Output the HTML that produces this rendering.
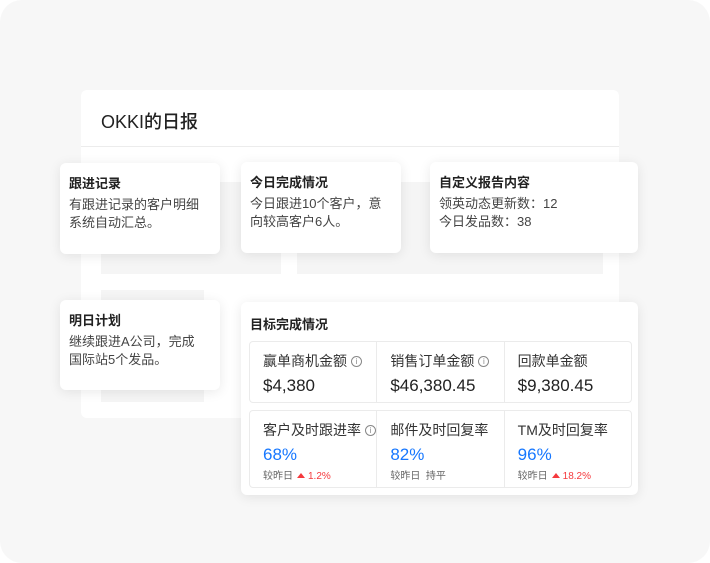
<!DOCTYPE html>
<html><head><meta charset="utf-8"><style>
*{margin:0;padding:0;box-sizing:border-box}
body{width:710px;height:563px;background:#fff;font-family:"Liberation Sans","Noto Sans CJK SC",sans-serif;position:relative;overflow:hidden;color:#262626}
.bg{position:absolute;left:0;top:0;width:710px;height:563px;background:#f7f7f7;border-radius:22px}
.panel{position:absolute;left:81px;top:90px;width:538px;height:328px;background:#fff;border-radius:6px}
.panel h1{position:absolute;left:20px;top:18px;font-size:18px;font-weight:500;color:#222}
.line{position:absolute;left:0;top:56px;width:538px;height:1px;background:#ececec}
.g{position:absolute;background:#f5f5f5}
.card{position:absolute;background:#fff;border-radius:6px;box-shadow:0 2px 12px rgba(0,0,0,.09);padding:10px 9px}
.card b{display:block;font-size:13px;font-weight:700;color:#222;margin-bottom:4px}
.card p{font-size:13px;line-height:18px;color:#444}
.grid{position:absolute;left:8px;border:1px solid #ebebeb;border-radius:4px;width:383px;display:flex;background:#fff}
.cell{flex:1;border-right:1px solid #ebebeb;padding:9px 0 0 13px}
.cell:last-child{border-right:0}
.lbl{font-size:14px;color:#333;display:flex;align-items:center}
.i{display:inline-block;width:11px;height:11px;border:1px solid #888;border-radius:50%;margin-left:4px;font-size:8px;line-height:9px;text-align:center;color:#888}
.val{font-size:17px;color:#222;margin-top:5px}
.blue{color:#1677ff}
.sm{font-size:10px;color:#666;margin-top:2px}
.red{color:#f5393d}
.tri{display:inline-block;width:0;height:0;border-left:4px solid transparent;border-right:4px solid transparent;border-bottom:5px solid #f5393d;margin:0 3px 1px 4px}
</style></head><body>
<div class="bg"></div>
<div class="panel"><h1>OKKI的日报</h1><div class="line"></div></div>
<div class="g" style="left:101px;top:182px;width:180px;height:92px"></div>
<div class="g" style="left:297px;top:182px;width:306px;height:92px"></div>
<div class="g" style="left:101px;top:290px;width:103px;height:112px"></div>
<div class="card" style="left:60px;top:163px;width:160px;height:91px"><b>跟进记录</b><p>有跟进记录的客户明细<br>系统自动汇总。</p></div>
<div class="card" style="left:241px;top:162px;width:160px;height:91px"><b>今日完成情况</b><p>今日跟进10个客户，意<br>向较高客户6人。</p></div>
<div class="card" style="left:430px;top:162px;width:208px;height:91px"><b>自定义报告内容</b><p>领英动态更新数：12<br>今日发品数：38</p></div>
<div class="card" style="left:60px;top:300px;width:160px;height:90px"><b>明日计划</b><p>继续跟进A公司，完成<br>国际站5个发品。</p></div>
<div class="card" style="left:241px;top:302px;width:397px;height:193px;padding:0">
<b style="position:absolute;left:9px;top:12px">目标完成情况</b>
<div class="grid" style="top:39px;height:62px">
<div class="cell"><div class="lbl">赢单商机金额<span class="i">i</span></div><div class="val">$4,380</div></div>
<div class="cell"><div class="lbl">销售订单金额<span class="i">i</span></div><div class="val">$46,380.45</div></div>
<div class="cell"><div class="lbl">回款单金额</div><div class="val">$9,380.45</div></div>
</div>
<div class="grid" style="top:108px;height:78px">
<div class="cell"><div class="lbl">客户及时跟进率<span class="i">i</span></div><div class="val blue">68%</div><div class="sm">较昨日<span class="tri"></span><span class="red">1.2%</span></div></div>
<div class="cell"><div class="lbl">邮件及时回复率</div><div class="val blue">82%</div><div class="sm">较昨日&nbsp; 持平</div></div>
<div class="cell"><div class="lbl">TM及时回复率</div><div class="val blue">96%</div><div class="sm">较昨日<span class="tri"></span><span class="red">18.2%</span></div></div>
</div>
</div>
</body></html>
